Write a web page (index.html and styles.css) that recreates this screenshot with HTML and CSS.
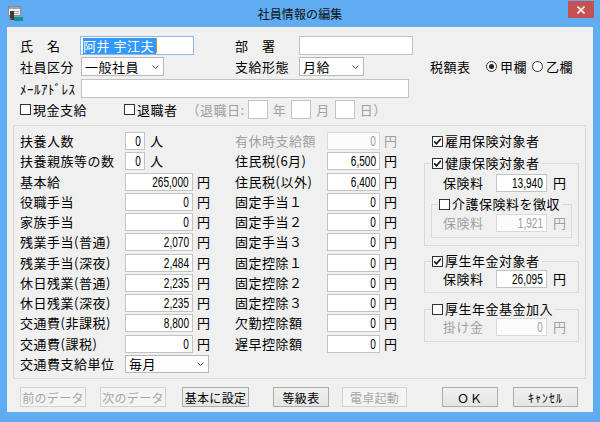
FILE: index.html
```html
<!DOCTYPE html>
<html lang="ja">
<head>
<meta charset="utf-8">
<title>社員情報の編集</title>
<link rel="stylesheet" href="styles.css">
</head>
<body>
<div class="window">
  <div class="titlebar">
    <svg class="app-icon" width="15" height="15" viewBox="0 0 15 15">
      <rect x="0.5" y="0.5" width="12" height="9" fill="#f2f2f2" stroke="#8a8a8a"/>
      <rect x="1" y="1" width="11" height="2" fill="#9aa7b5"/>
      <line x1="6" y1="5.5" x2="11" y2="5.5" stroke="#a8a8a8"/>
      <line x1="6" y1="7.5" x2="11" y2="7.5" stroke="#a8a8a8"/>
      <rect x="2" y="5" width="4" height="9" fill="#3a3a3a"/>
      <rect x="2" y="12" width="2" height="2" fill="#c23b2b"/>
      <rect x="6" y="11" width="9" height="4" fill="#1f8b8b"/>
    </svg>
    <div class="title">社員情報の編集</div>
    <div class="close">
      <svg width="8" height="8" viewBox="0 0 8 8"><path d="M0.5 0.5 L7.5 7.5 M7.5 0.5 L0.5 7.5" stroke="#fff" stroke-width="1.6"/></svg>
    </div>
  </div>

  <div class="client">
    <div class="top">
      <div class="row">
        <span class="lbl lbl-name">氏　名</span>
        <div class="edit edit-top w-name focus"><span class="sel">阿井 宇江夫</span><span class="caret"></span></div>
        <span class="lbl lbl-dept">部　署</span>
        <div class="edit edit-top w-name"></div>
      </div>
      <div class="row r2">
        <span class="lbl lbl-a">社員区分</span>
        <div class="combo c-kubun"><span>一般社員</span><svg class="chev" width="7" height="4" viewBox="0 0 7 4"><polyline points="0.5,0.5 3.5,3.5 6.5,0.5" fill="none" stroke="#444"/></svg></div>
        <span class="lbl lbl-pay">支給形態</span>
        <div class="combo c-keitai"><span>月給</span><svg class="chev" width="7" height="4" viewBox="0 0 7 4"><polyline points="0.5,0.5 3.5,3.5 6.5,0.5" fill="none" stroke="#444"/></svg></div>
        <span class="lbl lbl-tax">税額表</span>
        <span class="radio on"></span><span class="rtext">甲欄</span>
        <span class="radio r-second"></span><span class="rtext">乙欄</span>
      </div>
      <div class="row r3">
        <span class="lbl lbl-a">ﾒｰﾙｱﾄﾞﾚｽ</span>
        <div class="edit edit-top w-mail"></div>
      </div>
      <div class="row r4">
        <span class="chk-item ci-cash"><span class="cb"></span><span class="cbt">現金支給</span></span>
        <span class="chk-item"><span class="cb"></span><span class="cbt">退職者</span></span>
        <span class="gray ret-open">（退職日:</span>
        <div class="edit edit-top w-date"></div>
        <span class="gray d-unit">年</span>
        <div class="edit edit-top w-date"></div>
        <span class="gray d-unit">月</span>
        <div class="edit edit-top w-date"></div>
        <span class="gray d-unit">日）</span>
      </div>
    </div>

    <div class="group">
      <div class="col col-left">
        <div class="frow"><span class="l1">扶養人数</span><div class="edit num w-small"><span class="v">0</span></div><span class="unit u-person">人</span></div>
        <div class="frow"><span class="l1">扶養親族等の数</span><div class="edit num w-small"><span class="v">0</span></div><span class="unit u-person">人</span></div>
        <div class="frow"><span class="l1">基本給</span><div class="edit num w-l"><span class="v">265,000</span></div><span class="unit">円</span></div>
        <div class="frow"><span class="l1">役職手当</span><div class="edit num w-l"><span class="v">0</span></div><span class="unit">円</span></div>
        <div class="frow"><span class="l1">家族手当</span><div class="edit num w-l"><span class="v">0</span></div><span class="unit">円</span></div>
        <div class="frow"><span class="l1">残業手当(普通)</span><div class="edit num w-l"><span class="v">2,070</span></div><span class="unit">円</span></div>
        <div class="frow"><span class="l1">残業手当(深夜)</span><div class="edit num w-l"><span class="v">2,484</span></div><span class="unit">円</span></div>
        <div class="frow"><span class="l1">休日残業(普通)</span><div class="edit num w-l"><span class="v">2,235</span></div><span class="unit">円</span></div>
        <div class="frow"><span class="l1">休日残業(深夜)</span><div class="edit num w-l"><span class="v">2,235</span></div><span class="unit">円</span></div>
        <div class="frow"><span class="l1">交通費(非課税)</span><div class="edit num w-l"><span class="v">8,800</span></div><span class="unit">円</span></div>
        <div class="frow"><span class="l1">交通費(課税)</span><div class="edit num w-l"><span class="v">0</span></div><span class="unit">円</span></div>
        <div class="frow"><span class="l1">交通費支給単位</span><div class="combo c-unit"><span>毎月</span><svg class="chev" width="7" height="4" viewBox="0 0 7 4"><polyline points="0.5,0.5 3.5,3.5 6.5,0.5" fill="none" stroke="#444"/></svg></div></div>
      </div>

      <div class="col col-mid">
        <div class="frow"><span class="l2 gray">有休時支給額</span><div class="edit num w-m dis"><span class="v">0</span></div><span class="unit gray">円</span></div>
        <div class="frow"><span class="l2">住民税(6月)</span><div class="edit num w-m"><span class="v">6,500</span></div><span class="unit">円</span></div>
        <div class="frow"><span class="l2">住民税(以外)</span><div class="edit num w-m"><span class="v">6,400</span></div><span class="unit">円</span></div>
        <div class="frow"><span class="l2">固定手当１</span><div class="edit num w-m"><span class="v">0</span></div><span class="unit">円</span></div>
        <div class="frow"><span class="l2">固定手当２</span><div class="edit num w-m"><span class="v">0</span></div><span class="unit">円</span></div>
        <div class="frow"><span class="l2">固定手当３</span><div class="edit num w-m"><span class="v">0</span></div><span class="unit">円</span></div>
        <div class="frow"><span class="l2">固定控除１</span><div class="edit num w-m"><span class="v">0</span></div><span class="unit">円</span></div>
        <div class="frow"><span class="l2">固定控除２</span><div class="edit num w-m"><span class="v">0</span></div><span class="unit">円</span></div>
        <div class="frow"><span class="l2">固定控除３</span><div class="edit num w-m"><span class="v">0</span></div><span class="unit">円</span></div>
        <div class="frow"><span class="l2">欠勤控除額</span><div class="edit num w-m"><span class="v">0</span></div><span class="unit">円</span></div>
        <div class="frow"><span class="l2">遅早控除額</span><div class="edit num w-m"><span class="v">0</span></div><span class="unit">円</span></div>
      </div>

      <div class="col-right">
        <div class="rrow"><span class="cb on"><svg width="9" height="9" viewBox="0 0 9 9"><polyline points="1.2,4.4 3.5,6.8 7.8,1.8" fill="none" stroke="#111" stroke-width="1.6"/></svg></span><span class="cbt">雇用保険対象者</span></div>

        <fieldset class="fs fs-health">
          <legend><span class="leg"><span class="cb on"><svg width="9" height="9" viewBox="0 0 9 9"><polyline points="1.2,4.4 3.5,6.8 7.8,1.8" fill="none" stroke="#111" stroke-width="1.6"/></svg></span><span class="cbt">健康保険対象者</span></span></legend>
          <div class="irow"><span class="l3">保険料</span><div class="edit num w-r"><span class="v">13,940</span></div><span class="unit u-r">円</span></div>
          <fieldset class="fs fs-care">
            <legend><span class="leg"><span class="cb"></span><span class="cbt">介護保険料を徴収</span></span></legend>
            <div class="irow irow-in"><span class="l3 gray">保険料</span><div class="edit num w-r dis"><span class="v">1,921</span></div><span class="unit u-r gray">円</span></div>
          </fieldset>
        </fieldset>

        <fieldset class="fs fs-pension">
          <legend><span class="leg"><span class="cb on"><svg width="9" height="9" viewBox="0 0 9 9"><polyline points="1.2,4.4 3.5,6.8 7.8,1.8" fill="none" stroke="#111" stroke-width="1.6"/></svg></span><span class="cbt">厚生年金対象者</span></span></legend>
          <div class="irow"><span class="l3">保険料</span><div class="edit num w-r"><span class="v">26,095</span></div><span class="unit u-r">円</span></div>
        </fieldset>

        <fieldset class="fs fs-fund">
          <legend><span class="leg"><span class="cb"></span><span class="cbt">厚生年金基金加入</span></span></legend>
          <div class="irow"><span class="l3 gray">掛け金</span><div class="edit num w-r dis"><span class="v">0</span></div><span class="unit u-r gray">円</span></div>
        </fieldset>
      </div>
    </div>

    <div class="buttons">
      <div class="btn dis b-prev">前のデータ</div>
      <div class="btn dis b-next">次のデータ</div>
      <div class="btn b-base">基本に設定</div>
      <div class="btn b-grade">等級表</div>
      <div class="btn dis b-calc">電卓起動</div>
      <div class="btn b-ok">ＯＫ</div>
      <div class="btn b-cancel">ｷｬﾝｾﾙ</div>
    </div>
  </div>
</div>
</body>
</html>
```

FILE: styles.css
```css
* { box-sizing: border-box; }
html, body { margin: 0; padding: 0; }
body {
  width: 600px;
  height: 422px;
  overflow: hidden;
  font-family: "Noto Sans CJK JP", "Noto Sans", sans-serif;
  font-size: 13px;
  letter-spacing: 0.5px;
  color: #000;
}

.window {
  width: 600px;
  height: 422px;
  background: #60acf2;
  display: flex;
  flex-direction: column;
}

/* title bar */
.titlebar {
  height: 27px;
  flex: none;
  display: grid;
  grid-template-columns: 1fr auto 1fr;
  align-items: start;
}
.app-icon { margin: 6px 0 0 8px; display: block; }
.title {
  font-size: 12px;
  letter-spacing: 0.1px;
  line-height: 16px;
  margin-top: 6px;
  color: #111;
}
.close {
  justify-self: end;
  width: 26px;
  height: 17px;
  margin: 1px 6px 0 0;
  background: #c75050;
  display: flex;
  align-items: center;
  justify-content: center;
}
.close svg { display: block; margin-top: 1px; }

/* client area */
.client {
  flex: none;
  height: 385px;
  margin: 0 7px;
  background: #f0f0f0;
  display: flex;
  flex-direction: column;
}

.top { padding: 9px 0 0 13px; }
.row { display: flex; align-items: center; height: 19px; }
.r2 { margin-top: 2px; }
.r3 { margin-top: 3px; }
.r4 { margin-top: 2px; }

.lbl { flex: none; line-height: 19px; white-space: nowrap; }
.lbl-name { width: 60px; }
.lbl-a { width: 61px; }
.lbl-dept { width: 64px; margin-left: 41px; }
.lbl-pay { width: 64px; margin-left: 71px; }
.lbl-tax { width: 56px; margin-left: 66px; }

.edit {
  flex: none;
  height: 18px;
  border: 1px solid #c3c3c3;
  background: #fff;
  display: flex;
  align-items: center;
  justify-content: flex-end;
  padding: 0 3px;
  white-space: nowrap;
}
.edit-top { height: 19px; }
.w-name { width: 114px; }
.w-mail { width: 328px; }
.w-date { width: 20px; }
.focus {
  justify-content: flex-start;
  padding: 0 2px;
  border-color: #8fb8e6;
}
.sel {
  background: #3399ff;
  color: #fff;
  line-height: 16px;
  height: 16px;
  padding-right: 2px;
}
.caret { width: 1px; height: 15px; background: #d08a30; }

.combo {
  flex: none;
  height: 19px;
  border: 1px solid #b9b9b9;
  background: #fdfdfd;
  display: flex;
  align-items: center;
  justify-content: space-between;
  padding: 0 4px 0 3px;
}
.chev { display: block; }
.c-kubun { width: 83px; }
.c-keitai { width: 65px; }
.c-unit { width: 84px; height: 18px; }

.radio {
  flex: none;
  width: 11px;
  height: 11px;
  border: 1px solid #333;
  border-radius: 50%;
  background: #fff;
  display: flex;
  align-items: center;
  justify-content: center;
  margin-right: 3px;
}
.radio.on::after {
  content: "";
  width: 5px;
  height: 5px;
  border-radius: 50%;
  background: #222;
}
.r-second { margin-left: 5px; }
.rtext { line-height: 19px; }

.cb {
  flex: none;
  width: 11px;
  height: 11px;
  border: 1px solid #333;
  background: #fff;
  display: flex;
  align-items: center;
  justify-content: center;
}
.cb svg { display: block; }
.cbt { margin-left: 2px; line-height: 18px; white-space: nowrap; }
.chk-item { display: flex; align-items: center; flex: none; }
.ci-cash { width: 104px; }

.gray { color: #a0a0a0; }
.ret-open { margin-left: 9px; margin-right: 3px; line-height: 19px; }
.d-unit { margin: 0 5px 0 5px; line-height: 19px; }

/* main group box */
.group {
  margin: 6px 7px 0 6px;
  height: 254px;
  border: 1px solid #d9d9d9;
  padding: 6px 6px 0 6px;
  display: grid;
  grid-template-columns: 215px 189px 155px;
  align-items: start;
}
.col {
  display: grid;
  grid-auto-rows: 18px;
  row-gap: 2.27px;
}
.frow { display: flex; align-items: center; height: 18px; }
.l1 { width: 105px; flex: none; white-space: nowrap; line-height: 18px; }
.l2 { width: 92px; flex: none; white-space: nowrap; line-height: 18px; }
.unit { margin-left: 4px; line-height: 18px; flex: none; }
.u-person { margin-left: 5px; }

.num {
  font-family: "Liberation Sans", sans-serif;
  font-size: 14px;
  letter-spacing: 0;
  padding-right: 3px;
}
.v {
  display: inline-block;
  transform: scaleX(0.72);
  transform-origin: right center;
  line-height: 16px;
}
.w-small { width: 20px; }
.w-l { width: 68px; }
.w-m { width: 53px; }
.w-r { width: 51px; }
.dis { color: #a0a0a0; border-color: #dadada; background: #fcfcfc; }

/* right column */
.col-right { display: flex; flex-direction: column; }
.rrow { display: flex; align-items: center; height: 18px; padding-left: 8px; }

.fs {
  margin: 0;
  min-inline-size: auto;
  border: 1px solid #d9d9d9;
  padding: 0 6px;
}
.fs > legend {
  padding: 0 2px 0 1px;
  margin: 0;
  height: 16px;
  line-height: 16px;
}
.leg { display: flex; align-items: center; height: 16px; }
.leg .cbt { line-height: 16px; }
.fs-health { margin-top: 5px; padding-top: 3px; padding-bottom: 7px; }
.fs-care { margin-top: 4px; padding-top: 2px; padding-bottom: 5px; }
.fs-pension { margin-top: 7px; padding-top: 1px; padding-bottom: 4px; }
.fs-fund { margin-top: 8px; padding-top: 1px; padding-bottom: 5px; }

.irow { display: flex; align-items: center; height: 18px; padding-left: 12px; }
.irow-in { padding-left: 5px; }
.l3 { width: 53px; flex: none; line-height: 18px; white-space: nowrap; }
.u-r { margin-left: 6px; }

/* bottom buttons */
.buttons {
  display: flex;
  margin-top: 8px;
  padding-left: 13px;
}
.btn {
  flex: none;
  height: 20px;
  border: 1px solid #acacac;
  background: linear-gradient(#f0f0f0, #e5e5e5);
  font-size: 12px;
  letter-spacing: 0.3px;
  display: flex;
  align-items: center;
  justify-content: center;
  white-space: nowrap;
}
.btn.dis {
  border-color: #d3d3d3;
  background: #f4f4f4;
  color: #a5a5a5;
}
.b-prev { width: 66px; }
.b-next { width: 66px; margin-left: 14px; }
.b-base { width: 67px; margin-left: 16px; }
.b-grade { width: 56px; margin-left: 24px; }
.b-calc { width: 65px; margin-left: 13px; }
.b-ok { width: 56px; margin-left: 35px; letter-spacing: 1px; }
.b-cancel { width: 65px; margin-left: 15px; letter-spacing: 1px; }
```
